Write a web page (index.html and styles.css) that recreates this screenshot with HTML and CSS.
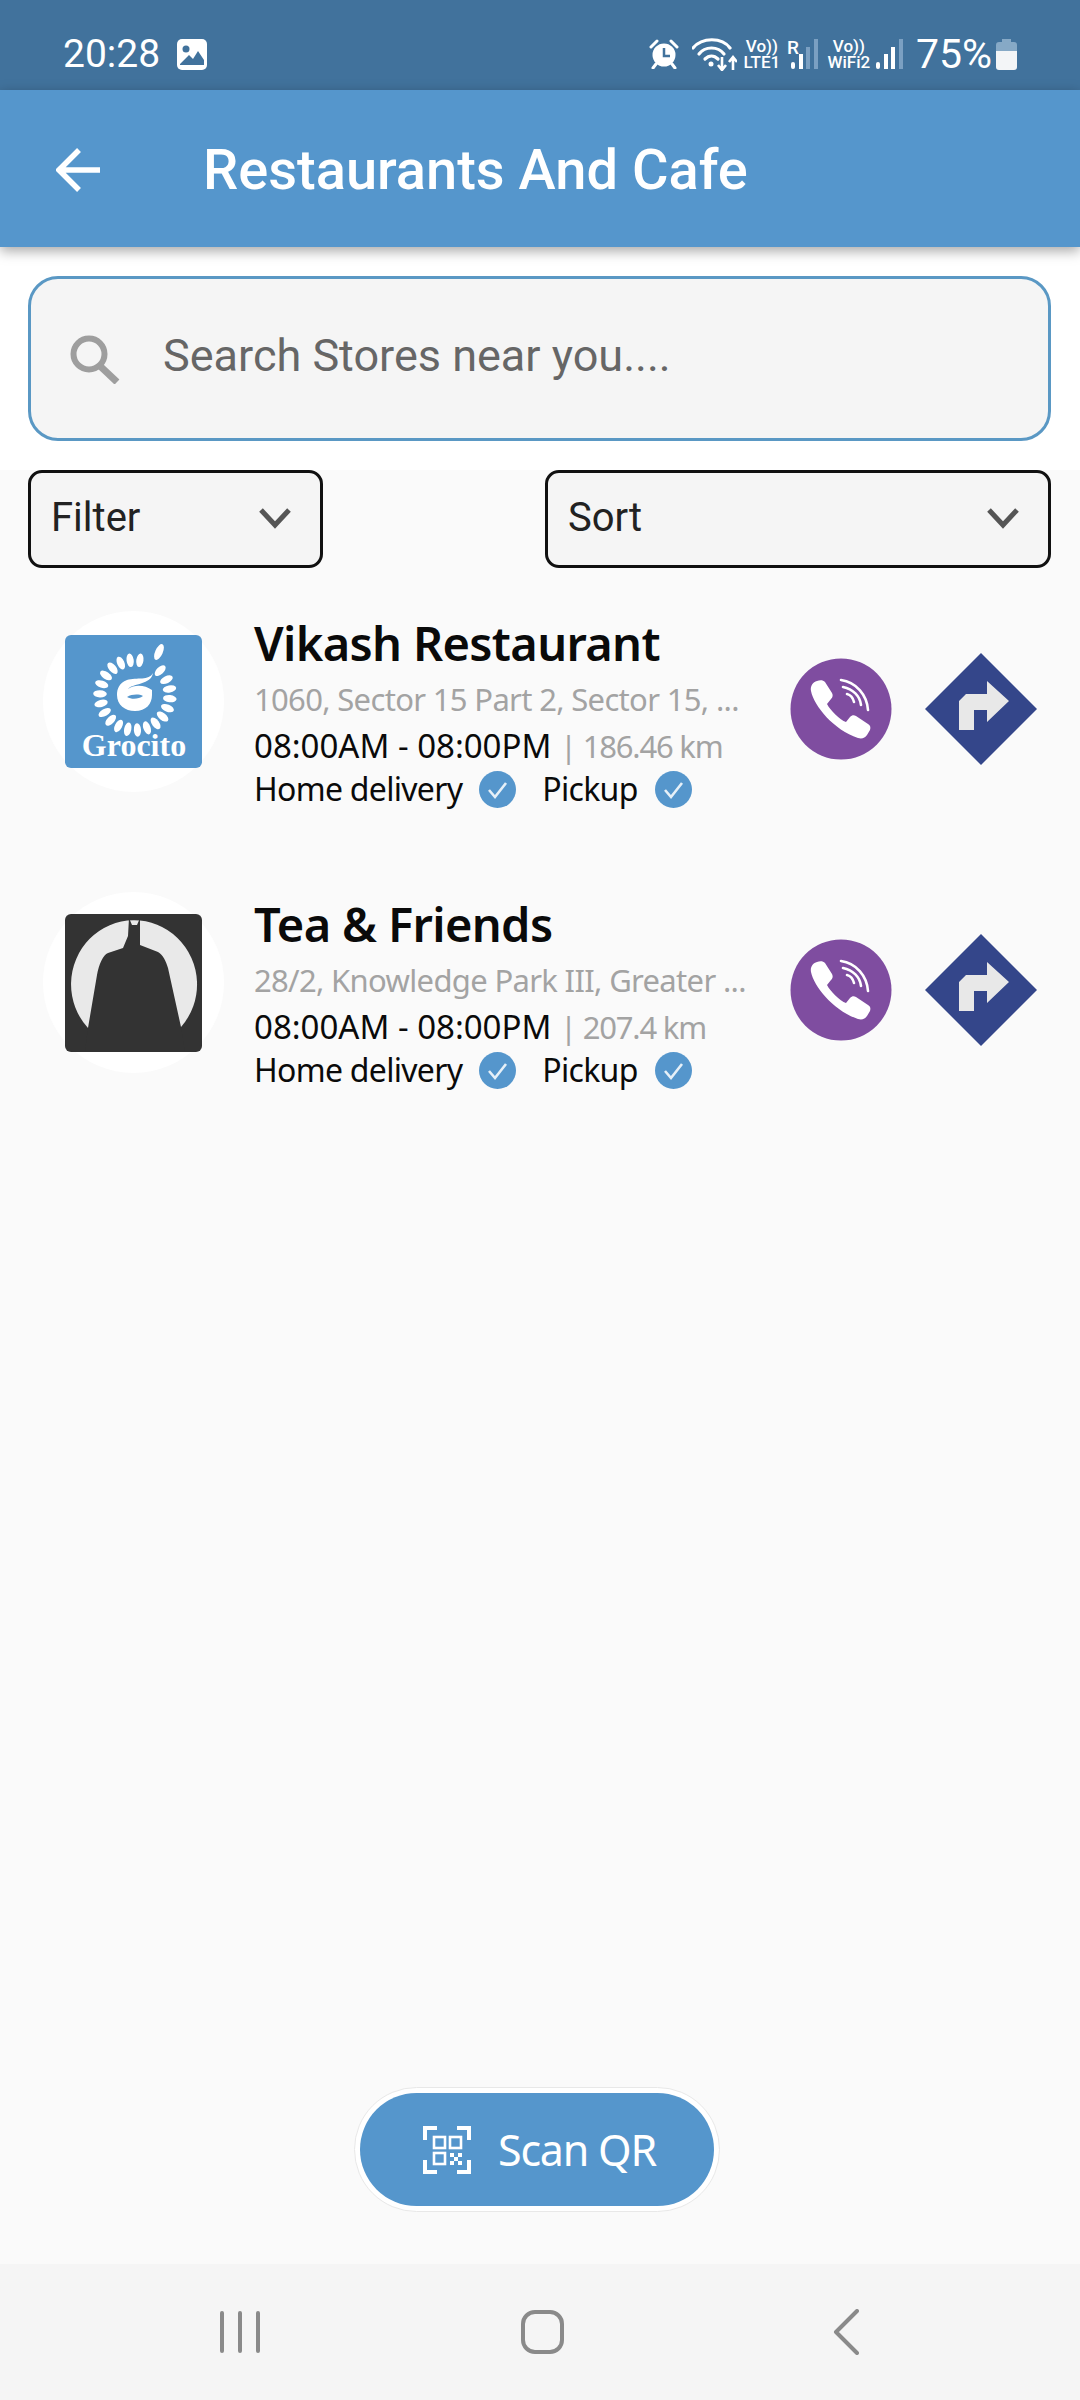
FILE: index.html
```html
<!DOCTYPE html>
<html>
<head>
  <title>Restaurants And Cafe</title>
  <link rel="stylesheet" href="styles.css">
</head>
<body>
  <div class="status-bar">
    <span class="clock">20:28</span>
    <svg class="gallery-icon" viewBox="0 0 30 31"><rect width="30" height="31" rx="5" fill="#fff"/><circle cx="9" cy="10" r="3.5" fill="#41729c"/><path d="M3 25 L12 16 L16 20 L21 12 L27 21 V26 H3 Z" fill="#41729c"/></svg>
    <div class="status-right">
      <svg class="alarm-icon" viewBox="0 0 30 30"><circle cx="15" cy="16" r="11.5" fill="#fff"/><path d="M15 9 V17 H21" fill="none" stroke="#41729c" stroke-width="2.5"/><path d="M2 8 L8 2 M28 8 L22 2 M7 25 L4 29 M23 25 L26 29" stroke="#fff" stroke-width="3" stroke-linecap="round"/></svg>
      <svg class="wifi-icon" viewBox="0 0 45 34"><g fill="none" stroke="#fff" stroke-width="3.2" stroke-linecap="round"><path d="M1 11 C10 0 30 0 38 11"/><path d="M7 17 C13 9 26 9 32 17"/><path d="M13 22 C17 18 22 18 26 22"/></g><circle cx="19" cy="27" r="2.5" fill="#fff"/><path d="M30 20 V32 M26 28 L30 33 L34 28 M41 33 V21 M37 25 L41 20 L45 25" fill="none" stroke="#fff" stroke-width="2.6"/></svg>
      <div class="sim sim-one"><span>Vo))</span><span>LTE1</span></div>
      <div class="roam">R</div>
      <svg class="signal-icon" viewBox="0 0 27 30"><rect x="0" y="23" width="4" height="7" rx="2" fill="#fff"/><rect x="8" y="15" width="4" height="15" fill="#fff"/><rect x="15" y="8" width="4" height="22" fill="#7ba0c2"/><rect x="23" y="0" width="4" height="30" fill="#7ba0c2"/></svg>
      <div class="sim sim-two"><span>Vo))</span><span>WiFi2</span></div>
      <svg class="signal-icon" viewBox="0 0 27 30"><rect x="0" y="23" width="4" height="7" rx="2" fill="#fff"/><rect x="8" y="15" width="4" height="15" fill="#fff"/><rect x="15" y="8" width="4" height="22" fill="#fff"/><rect x="23" y="0" width="4" height="30" fill="#7ba0c2"/></svg>
      <span class="battery-text">75%</span>
      <svg class="battery-icon" viewBox="0 0 21 31"><path d="M6 0 H15 V3 H18 Q21 3 21 6 V13 H0 V6 Q0 3 3 3 H6 Z" fill="#86a9c6"/><path d="M0 12 H21 V28 Q21 31 18 31 H3 Q0 31 0 28 Z" fill="#f3f5f7"/></svg>
    </div>
  </div>

  <header class="app-bar">
    <svg class="back-arrow" viewBox="0 0 46 44"><path d="M44 22 H4 M23 2 L3 22 L23 42" fill="none" stroke="#fff" stroke-width="5.5"/></svg>
    <h1>Restaurants And Cafe</h1>
  </header>

  <section class="search-section">
    <div class="search-box">
      <svg class="search-icon" viewBox="0 0 51 50"><circle cx="20" cy="20" r="15.5" fill="none" stroke="#9e9e9e" stroke-width="6"/><path d="M31 32 L48 48" stroke="#9e9e9e" stroke-width="7"/></svg>
      <span class="search-text">Search Stores near you....</span>
    </div>
  </section>

  <section class="dropdowns">
    <div class="dropdown dropdown-filter">
      <span>Filter</span>
      <svg class="chevron" viewBox="0 0 34 22"><path d="M3 3 L17 18 L31 3" fill="none" stroke="#555" stroke-width="5"/></svg>
    </div>
    <div class="dropdown dropdown-sort">
      <span>Sort</span>
      <svg class="chevron" viewBox="0 0 34 22"><path d="M3 3 L17 18 L31 3" fill="none" stroke="#555" stroke-width="5"/></svg>
    </div>
  </section>

  <main class="store-list">
    <article class="store">
      <div class="avatar">
        <svg class="logo" viewBox="0 0 137 133">
          <rect width="137" height="133" rx="6" fill="#5596cc"/>
          <defs><ellipse id="leaf" cx="70" cy="25" rx="3.6" ry="6.8" fill="#fff"/></defs>
          <g>
            <use href="#leaf" transform="rotate(-8 70 60)"/>
            <use href="#leaf" transform="rotate(8 70 60)"/>
            <use href="#leaf" transform="rotate(-24 70 60)"/>
            <use href="#leaf" transform="rotate(-40 70 60)"/>
            <use href="#leaf" transform="rotate(-56 70 60)"/>
            <use href="#leaf" transform="rotate(-72 70 60)"/>
            <use href="#leaf" transform="rotate(-88 70 60)"/>
            <use href="#leaf" transform="rotate(-104 70 60)"/>
            <use href="#leaf" transform="rotate(-120 70 60)"/>
            <use href="#leaf" transform="rotate(-136 70 60)"/>
            <use href="#leaf" transform="rotate(-152 70 60)"/>
            <use href="#leaf" transform="rotate(-168 70 60)"/>
            <use href="#leaf" transform="rotate(176 70 60)"/>
            <use href="#leaf" transform="rotate(160 70 60)"/>
            <use href="#leaf" transform="rotate(144 70 60)"/>
            <use href="#leaf" transform="rotate(128 70 60)"/>
            <use href="#leaf" transform="rotate(112 70 60)"/>
            <use href="#leaf" transform="rotate(96 70 60)"/>
            <use href="#leaf" transform="rotate(80 70 60)"/>
            <use href="#leaf" transform="rotate(64 70 60)"/>
            <use href="#leaf" transform="rotate(46 70 60)"/>
          </g>
          <ellipse cx="94" cy="17" rx="3.8" ry="8.5" fill="#fff" transform="rotate(24 94 17)"/>
          <path d="M88 38 C84 46 72 42 62 45 C54 48 52 54 52 60 C52 70 60 76 70 76 C81 76 87 69 87 60 L87 55 C80 50 70 49 63 54 C68 48 86 50 88 38 Z" fill="#fff"/>
          <path d="M62 62 C67 59 74 59 78 61 C74 64 67 65 62 62 Z" fill="#5596cc"/>
          <text class="logo-word" x="69" y="121">Grocito</text>
        </svg>
      </div>
      <div class="store-info">
        <h2>Vikash Restaurant</h2>
        <p class="address">1060, Sector 15 Part 2, Sector 15, ...</p>
        <p class="hours">08:00AM - 08:00PM <span class="distance">| 186.46 km</span></p>
        <p class="options">
          <span>Home delivery</span>
          <svg class="check" viewBox="0 0 37 37"><circle cx="18.5" cy="18.5" r="18.5" fill="#5596cc"/><path d="M10 19 L16 26 L27 12" fill="none" stroke="#e6f0f8" stroke-width="2.6"/></svg>
          <span class="pickup">Pickup</span>
          <svg class="check" viewBox="0 0 37 37"><circle cx="18.5" cy="18.5" r="18.5" fill="#5596cc"/><path d="M10 19 L16 26 L27 12" fill="none" stroke="#e6f0f8" stroke-width="2.6"/></svg>
        </p>
      </div>
      <div class="actions">
        <svg class="call-btn" viewBox="0 0 102 102">
          <circle cx="51" cy="51" r="50.5" fill="#7f4da0"/>
          <path d="M27 23 C23 24 20 28 21 33 C24 48 44 72 68 80 C72 81 75 80 77 77 L80 72 C81 69 80 67 78 66 L66 58 C64 57 62 57 60 59 L56 64 C50 62 40 52 37 46 L41 41 C43 39 43 37 42 35 L35 24 C33 22 30 22 27 23 Z" fill="#fff"/>
          <g fill="none" stroke="#fff" stroke-linecap="round" stroke-width="2.6">
            <path d="M51 22 C66 24 77 37 78 52"/>
            <path d="M53 29 C63 31 70 38 71 47"/>
            <path d="M57 36 C61 37 63 40 64 44"/>
          </g>
        </svg>
        <svg class="direction-btn" viewBox="0 0 112 112">
          <path d="M56 0 L112 56 L56 112 L0 56 Z" fill="#34468a"/>
          <path d="M34 77 H49 V57 H62 V69 L84 48 L62 28 V41 H41 L34 48 Z" fill="#e8e8e8"/>
        </svg>
      </div>
    </article>

    <article class="store">
      <div class="avatar">
        <svg class="logo" viewBox="0 0 137 138">
          <rect width="137" height="138" rx="6" fill="#333"/>
          <path d="M23 114 A63 64 0 1 1 116 113 Z" fill="#e9e9e9"/>
          <path d="M23 114 L32 61 C34 50 38 41 43 39 L58 34 L63 22 L64 4 L67 11 H72 L75 4 L75 31 L93 38 C98 41 101 47 103 54 L116 113 L120 138 H20 Z" fill="#333"/>
        </svg>
      </div>
      <div class="store-info">
        <h2>Tea &amp; Friends</h2>
        <p class="address">28/2, Knowledge Park III, Greater ...</p>
        <p class="hours">08:00AM - 08:00PM <span class="distance">| 207.4 km</span></p>
        <p class="options">
          <span>Home delivery</span>
          <svg class="check" viewBox="0 0 37 37"><circle cx="18.5" cy="18.5" r="18.5" fill="#5596cc"/><path d="M10 19 L16 26 L27 12" fill="none" stroke="#e6f0f8" stroke-width="2.6"/></svg>
          <span class="pickup">Pickup</span>
          <svg class="check" viewBox="0 0 37 37"><circle cx="18.5" cy="18.5" r="18.5" fill="#5596cc"/><path d="M10 19 L16 26 L27 12" fill="none" stroke="#e6f0f8" stroke-width="2.6"/></svg>
        </p>
      </div>
      <div class="actions">
        <svg class="call-btn" viewBox="0 0 102 102">
          <circle cx="51" cy="51" r="50.5" fill="#7f4da0"/>
          <path d="M27 23 C23 24 20 28 21 33 C24 48 44 72 68 80 C72 81 75 80 77 77 L80 72 C81 69 80 67 78 66 L66 58 C64 57 62 57 60 59 L56 64 C50 62 40 52 37 46 L41 41 C43 39 43 37 42 35 L35 24 C33 22 30 22 27 23 Z" fill="#fff"/>
          <g fill="none" stroke="#fff" stroke-linecap="round" stroke-width="2.6">
            <path d="M51 22 C66 24 77 37 78 52"/>
            <path d="M53 29 C63 31 70 38 71 47"/>
            <path d="M57 36 C61 37 63 40 64 44"/>
          </g>
        </svg>
        <svg class="direction-btn" viewBox="0 0 112 112">
          <path d="M56 0 L112 56 L56 112 L0 56 Z" fill="#34468a"/>
          <path d="M34 77 H49 V57 H62 V69 L84 48 L62 28 V41 H41 L34 48 Z" fill="#e8e8e8"/>
        </svg>
      </div>
    </article>
  </main>

  <div class="scan-wrap">
    <div class="scan-ring">
      <div class="scan-btn">
        <svg class="qr-icon" viewBox="0 0 48 48">
          <path d="M2 14 V2 H14 M34 2 H46 V14 M2 34 V46 H14 M34 46 H46 V34" fill="none" stroke="#fff" stroke-width="4"/>
          <rect x="11" y="11" width="11" height="11" fill="none" stroke="#fff" stroke-width="2.6"/>
          <rect x="27" y="11" width="11" height="11" fill="none" stroke="#fff" stroke-width="2.6"/>
          <rect x="11" y="27" width="11" height="11" fill="none" stroke="#fff" stroke-width="2.6"/>
          <path d="M27 27 h4 v4 h-4 Z M35 27 h4 v4 h-4 Z M31 31 h4 v4 h-4 Z M27 35 h4 v4 h-4 Z M35 35 h4 v4 h-4 Z" fill="#fff"/>
        </svg>
        <span>Scan QR</span>
      </div>
    </div>
  </div>

  <nav class="nav-bar">
    <svg class="nav-recent" viewBox="0 0 40 42"><path d="M2 2 V40 M20 2 V40 M38 2 V40" stroke="#8a8a8a" stroke-width="4" stroke-linecap="round"/></svg>
    <svg class="nav-home" viewBox="0 0 43 44"><rect x="2" y="2" width="39" height="40" rx="12" fill="none" stroke="#8a8a8a" stroke-width="4"/></svg>
    <svg class="nav-back" viewBox="0 0 26 46"><path d="M24 2 L3 23 L24 44" fill="none" stroke="#8a8a8a" stroke-width="4" stroke-linecap="round" stroke-linejoin="round"/></svg>
  </nav>
</body>
</html>
```

FILE: styles.css
```css
* {
  box-sizing: border-box;
}

body {
  margin: 0;
  width: 1080px;
  height: 2400px;
  display: flex;
  flex-direction: column;
  background-color: #fafafa;
  font-family: Roboto, sans-serif;
  color: #111;
  overflow: hidden;
}

svg {
  display: block;
  flex-shrink: 0;
}

/* status bar */
.status-bar {
  height: 90px;
  display: flex;
  align-items: center;
  padding: 18px 63px 0 63px;
  background-color: #41729c;
  color: #fff;
}

.clock {
  font-size: 39px;
  line-height: 40px;
  width: 114px;
}

.gallery-icon {
  width: 30px;
  height: 31px;
}

.status-right {
  margin-left: auto;
  display: flex;
  align-items: center;
}

.alarm-icon {
  width: 30px;
  height: 30px;
}

.wifi-icon {
  width: 45px;
  height: 34px;
  margin-left: 13px;
}

.sim {
  display: flex;
  flex-direction: column;
  align-items: center;
  font-size: 17px;
  line-height: 16px;
  font-weight: 500;
}

.sim-one {
  width: 40px;
  margin-left: 5px;
}

.roam {
  font-size: 19px;
  font-weight: 500;
  line-height: 18px;
  width: 12px;
  margin: -12px -8px 0 5px;
}

.signal-icon {
  width: 27px;
  height: 30px;
}

.sim-two {
  width: 38px;
  margin-left: 12px;
}

.sim-two + .signal-icon {
  margin-left: 8px;
}

.battery-text {
  font-size: 41px;
  line-height: 40px;
  margin-left: 13px;
}

.battery-icon {
  width: 21px;
  height: 31px;
  margin-left: 4px;
}

/* app bar */
.app-bar {
  height: 157px;
  display: flex;
  align-items: center;
  padding: 3px 0 0 56px;
  background-color: #5596cc;
  box-shadow: 0 4px 12px rgba(0, 0, 0, 0.35);
  position: relative;
}

.back-arrow {
  width: 46px;
  height: 44px;
}

.app-bar h1 {
  margin: 0 0 0 101px;
  font-size: 56px;
  font-weight: 500;
  color: #fff;
}

/* search */
.search-section {
  height: 223px;
  padding: 29px 29px 0 28px;
  background-color: #fff;
}

.search-box {
  height: 165px;
  display: flex;
  align-items: center;
  padding: 0 0 6px 38px;
  background-color: #f5f5f5;
  border: 3px solid #5a98c4;
  border-radius: 30px;
}

.search-icon {
  width: 51px;
  height: 50px;
  margin-top: 6px;
}

.search-text {
  margin-left: 43px;
  font-size: 45px;
  color: #666;
}

/* filter and sort */
.dropdowns {
  display: flex;
  justify-content: space-between;
  padding: 0 29px 0 28px;
}

.dropdown {
  height: 98px;
  display: flex;
  align-items: center;
  justify-content: space-between;
  padding: 0 28px 4px 20px;
  background-color: #f5f5f5;
  border: 3px solid #111;
  border-radius: 14px;
  font-size: 40px;
  color: #222;
}

.dropdown-filter {
  width: 295px;
}

.dropdown-sort {
  width: 506px;
}

.chevron {
  width: 34px;
  height: 22px;
  margin-top: 2px;
}

/* store rows */
.store-list {
  flex: 1;
  padding-top: 43px;
}

.store {
  height: 281px;
  display: flex;
  padding-left: 43px;
  font-family: "Noto Sans", sans-serif;
}

.avatar {
  width: 181px;
  height: 181px;
  display: flex;
  align-items: center;
  justify-content: center;
  background-color: #fff;
  border-radius: 50%;
}

.logo {
  width: 137px;
  height: auto;
}

.logo-word {
  font-family: "Liberation Serif", serif;
  font-weight: bold;
  font-size: 32px;
  fill: #fff;
  text-anchor: middle;
}

.store-info {
  width: 530px;
  margin: -1px 0 0 30px;
}

.store-info h2 {
  margin: 0;
  font-size: 47px;
  line-height: 66px;
  font-weight: 600;
  letter-spacing: -0.65px;
  color: #0a0a0a;
}

.store-info p {
  margin: 0;
  line-height: 46px;
}

.address {
  font-size: 31px;
  letter-spacing: -0.67px;
  color: #a3a3a3;
  white-space: nowrap;
}

.store-info .hours {
  margin-top: 1px;
  font-size: 33px;
  color: #0a0a0a;
}

.distance {
  font-size: 31px;
  letter-spacing: -1.2px;
  color: #a3a3a3;
}

.store-info .options {
  display: flex;
  align-items: center;
  margin-top: -3px;
  font-size: 32px;
  letter-spacing: -0.7px;
  color: #0a0a0a;
}

.check {
  width: 37px;
  height: 37px;
  margin-left: 17px;
}

.pickup {
  margin-left: 26px;
}

.actions {
  display: flex;
  align-items: center;
  height: 112px;
  margin: 42px 0 0 6px;
}

.call-btn {
  width: 102px;
  height: 102px;
}

.direction-btn {
  width: 112px;
  height: 112px;
  margin-left: 33px;
}

/* scan button */
.scan-wrap {
  display: flex;
  justify-content: center;
  padding: 0 6px 52px 0;
}

.scan-ring {
  padding: 5px;
  background-color: #fff;
  border: 1px solid #e8e8e8;
  border-radius: 63px;
}

.scan-btn {
  width: 354px;
  height: 113px;
  display: flex;
  align-items: center;
  padding-left: 63px;
  background-color: #5596cc;
  border-radius: 57px;
  color: #fff;
  font-family: "Noto Sans", sans-serif;
  font-size: 43px;
  letter-spacing: -1.2px;
}

.qr-icon {
  width: 48px;
  height: 48px;
}

.scan-btn span {
  margin-left: 27px;
}

/* system nav */
.nav-bar {
  height: 136px;
  display: flex;
  align-items: center;
  padding: 0 0 0 220px;
  background-color: #f5f5f5;
}

.nav-recent {
  width: 40px;
  height: 42px;
}

.nav-home {
  width: 43px;
  height: 44px;
  margin-left: 261px;
}

.nav-back {
  width: 26px;
  height: 46px;
  margin-left: 269px;
}
```
